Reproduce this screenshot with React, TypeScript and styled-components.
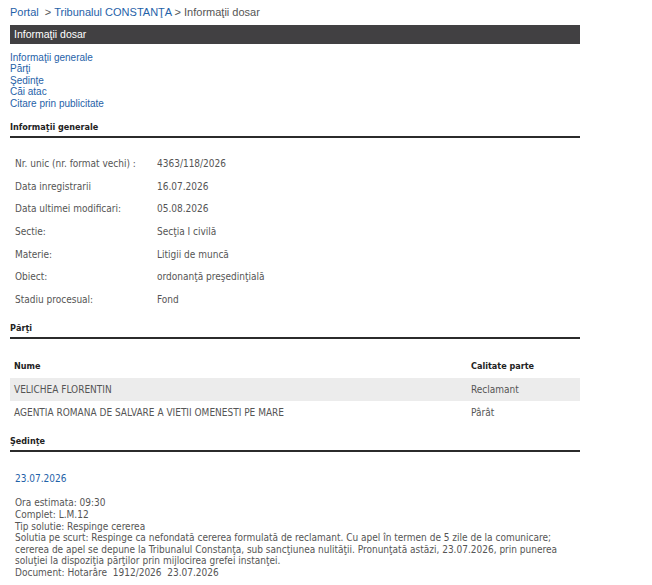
import React from 'react'
import styled, { createGlobalStyle } from 'styled-components'

const GlobalStyle = createGlobalStyle`
  body {
    margin: 0;
    background: #fff;
  }
`

const Page = styled.div`
  width: 570px;
  padding: 6px 0 0 10px;
  font-family: "Liberation Sans", Arial, sans-serif;
`

const Crumbs = styled.div`
  font-size: 11px;
  line-height: 13px;
  color: #555;
  & a { color: #1f62a8; text-decoration: none; }
`

const TitleBar = styled.div`
  margin-top: 6px;
  height: 19px;
  line-height: 19px;
  background: #414042;
  color: #fff;
  font-size: 10.5px;
  padding-left: 4px;
`

const Nav = styled.nav`
  margin-top: 8px;
  display: flex;
  flex-direction: column;
  font-size: 10px;
  line-height: 11.4px;
  & a { color: #1f62a8; text-decoration: none; }
`

const SectionHead = styled.h3<{ $top: number }>`
  margin: ${p => p.$top}px 0 0;
  font-family: "DejaVu Sans Condensed", "DejaVu Sans", sans-serif;
  font-size: 9px;
  font-weight: bold;
  color: #222;
  line-height: 12px;
  padding-bottom: 3px;
  border-bottom: 2px solid #2b2b2b;
`

const Body = styled.div`
  font-family: "DejaVu Sans Condensed", "DejaVu Sans", sans-serif;
  font-size: 10px;
  color: #555;
`

const InfoGrid = styled.div`
  display: grid;
  grid-template-columns: 142px 1fr;
  grid-auto-rows: 22.7px;
  align-items: center;
  padding: 14px 0 0 5px;
`

const Table = styled.div`
  margin-top: 16px;
`

const TRow = styled.div<{ $shade?: boolean; $head?: boolean }>`
  display: grid;
  grid-template-columns: 457px 1fr;
  height: 23px;
  align-items: center;
  padding-left: 4px;
  background: ${p => (p.$shade ? '#ececec' : 'transparent')};
  color: ${p => (p.$head ? '#222' : '#555')};
  font-weight: ${p => (p.$head ? 'bold' : 'normal')};
  font-size: ${p => (p.$head ? '9px' : '10px')};
`

const Hearing = styled.div`
  padding: 21px 0 0 5px;
  line-height: 11.6px;
`

const DateLink = styled.a`
  display: block;
  color: #1f62a8;
  text-decoration: none;
  margin-bottom: 13px;
`

const info: [string, string][] = [
  ['Nr. unic (nr. format vechi) :', '4363/118/2026'],
  ['Data inregistrarii', '16.07.2026'],
  ['Data ultimei modificari:', '05.08.2026'],
  ['Sectie:', 'Secţia I civilă'],
  ['Materie:', 'Litigii de muncă'],
  ['Obiect:', 'ordonanţă preşedinţială'],
  ['Stadiu procesual:', 'Fond'],
]

const parties: [string, string][] = [
  ['VELICHEA FLORENTIN', 'Reclamant'],
  ['AGENTIA ROMANA DE SALVARE A VIETII OMENESTI PE MARE', 'Pârât'],
]

export default function App() {
  return (
    <Page>
      <GlobalStyle />
      <Crumbs>
        <a href="#">Portal</a>&nbsp; &gt; <a href="#">Tribunalul CONSTANŢA</a> &gt; Informaţii dosar
      </Crumbs>
      <TitleBar>Informaţii dosar</TitleBar>
      <Nav>
        <a href="#">Informaţii generale</a>
        <a href="#">Părţi</a>
        <a href="#">Şedinţe</a>
        <a href="#">Căi atac</a>
        <a href="#">Citare prin publicitate</a>
      </Nav>

      <SectionHead $top={12}>Informaţii generale</SectionHead>
      <Body>
        <InfoGrid>
          {info.map(([k, v]) => (
            <React.Fragment key={k}>
              <span>{k}</span>
              <span>{v}</span>
            </React.Fragment>
          ))}
        </InfoGrid>
      </Body>

      <SectionHead $top={11}>Părţi</SectionHead>
      <Body>
        <Table>
          <TRow $head>
            <span>Nume</span>
            <span>Calitate parte</span>
          </TRow>
          {parties.map(([name, role], i) => (
            <TRow key={name} $shade={i % 2 === 0}>
              <span>{name}</span>
              <span>{role}</span>
            </TRow>
          ))}
        </Table>
      </Body>

      <SectionHead $top={11}>Şedinţe</SectionHead>
      <Body>
        <Hearing>
          <DateLink href="#">23.07.2026</DateLink>
          <div>Ora estimata: 09:30</div>
          <div>Complet: L.M.12</div>
          <div>Tip solutie: Respinge cererea</div>
          <div>
            Solutia pe scurt: Respinge ca nefondată cererea formulată de reclamant. Cu apel în termen de 5 zile de la comunicare;
            cererea de apel se depune la Tribunalul Constanţa, sub sancţiunea nulităţii. Pronunţată astăzi, 23.07.2026, prin punerea
            soluţiei la dispoziţia părţilor prin mijlocirea grefei instanţei.
          </div>
          <div>Document: Hotarâre&nbsp; 1912/2026&nbsp; 23.07.2026</div>
        </Hearing>
      </Body>
    </Page>
  )
}
